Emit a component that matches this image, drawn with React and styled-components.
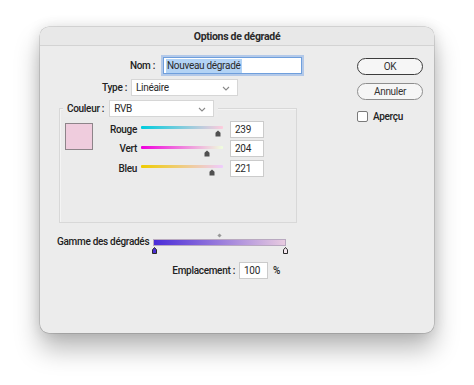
import React from "react";
import styled, { createGlobalStyle } from "styled-components";

const GlobalStyle = createGlobalStyle`
	html, body {
		margin: 0;
		background: #ffffff;
	}
	body {
		font-family: Roboto, "Noto Sans", sans-serif;
		font-size: 10px;
		letter-spacing: -0.3px;
		color: #222222;
	}
`;

const color = { r: 239, g: 204, b: 221 };

const channels = [
	{ key: "r", label: "Rouge" },
	{ key: "g", label: "Vert" },
	{ key: "b", label: "Bleu" },
];

const trackGradient = (key) => {
	const from = { ...color, [key]: 0 };
	const to = { ...color, [key]: 255 };
	return `linear-gradient(to right, rgb(${from.r},${from.g},${from.b}), rgb(${to.r},${to.g},${to.b}))`;
};

const House = ({ fill, stroke, w = 6, h = 6 }) => (
	<svg width={w} height={h} viewBox={`0 0 ${w} ${h}`}>
		<path
			d={`M${w / 2} 0.5 L${w - 0.5} ${h * 0.4} V${h - 0.5} H0.5 V${h * 0.4} Z`}
			fill={fill}
			stroke={stroke || "none"}
			strokeWidth="1"
		/>
	</svg>
);

const Chevron = () => (
	<svg width="8" height="5" viewBox="0 0 8 5">
		<path d="M1 1 L4 4 L7 1" fill="none" stroke="#8a8a8a" strokeWidth="1.1" />
	</svg>
);

const App = () => {
	return (
		<Page>
			<GlobalStyle />
			<Window>
				<TitleBar>Options de dégradé</TitleBar>
				<Body>
					<MainCol>
						<FieldRow>
							<Label $w={115}>Nom :</Label>
							<NameInput>
								<Selected>Nouveau dégradé</Selected>
							</NameInput>
						</FieldRow>

						<FieldRow $top={5}>
							<Label $w={87} $gap={4}>
								Type :
							</Label>
							<Select $w={107}>
								Linéaire
								<Chevron />
							</Select>
						</FieldRow>

						<Group>
							<Legend>
								<Label $gap={5}>Couleur :</Label>
								<Select $w={105}>
									RVB
									<Chevron />
								</Select>
							</Legend>
							<GroupContent>
								<Swatch />
								<Sliders>
									{channels.map((c) => (
										<SliderRow key={c.key}>
											<Label $w={44} $gap={4}>
												{c.label}
											</Label>
											<Track>
												<TrackBar style={{ background: trackGradient(c.key) }} />
												<Thumb style={{ left: `${(color[c.key] / 255) * 82 - 3}px` }}>
													<House w={6} h={7} fill="#505050" />
												</Thumb>
											</Track>
											<NumberBox $w={34} $left={7}>
												{color[c.key]}
											</NumberBox>
										</SliderRow>
									))}
								</Sliders>
							</GroupContent>
						</Group>

						<GammeRow>
							<GammeLabel>Gamme des dégradés</GammeLabel>
							<Range>
								<MidRow>
									<Diamond />
								</MidRow>
								<GradientBar />
								<StopsRow>
									<House w={5} h={7} fill="#4b2fd2" stroke="#2a2a2a" />
									<House w={5} h={7} fill="#f4e6ee" stroke="#2a2a2a" />
								</StopsRow>
							</Range>
						</GammeRow>

						<FieldRow $top={8}>
							<Label $w={195} $gap={4}>
								Emplacement :
							</Label>
							<NumberBox $w={29}>100</NumberBox>
							<Percent>%</Percent>
						</FieldRow>
					</MainCol>

					<SideCol>
						<Button $primary>OK</Button>
						<Button $top={8}>Annuler</Button>
						<CheckRow>
							<CheckBox />
							Aperçu
						</CheckRow>
					</SideCol>
				</Body>
			</Window>
		</Page>
	);
};

export default App;

const Page = styled.div`
	width: 474px;
	height: 385px;
	padding: 27px 0 0 40px;
	box-sizing: border-box;
`;

const Window = styled.div`
	width: 394px;
	height: 306px;
	background: #ececec;
	border-radius: 9px;
	overflow: hidden;
	display: flex;
	flex-direction: column;
	box-shadow:
		0 0 0 0.5px rgba(0, 0, 0, 0.22),
		0 16px 26px rgba(0, 0, 0, 0.28),
		0 0 14px rgba(0, 0, 0, 0.12);
`;

const TitleBar = styled.div`
	height: 18px;
	display: flex;
	align-items: center;
	justify-content: center;
	font-weight: 700;
	font-size: 10.5px;
	background: #e8e8e8;
	border-bottom: 1px solid #d3d3d3;
	color: #2a2a2a;
`;

const Body = styled.div`
	flex: 1;
	display: flex;
	padding-top: 11px;
`;

const MainCol = styled.div`
	width: 317px;
	display: flex;
	flex-direction: column;
`;

const SideCol = styled.div`
	display: flex;
	flex-direction: column;
	padding-top: 1px;
`;

const FieldRow = styled.div`
	display: flex;
	align-items: center;
	height: 17px;
	margin-top: ${(p) => p.$top || 0}px;
`;

const Label = styled.div`
	width: ${(p) => (p.$w ? `${p.$w}px` : "auto")};
	margin-right: ${(p) => (p.$gap == null ? 8 : p.$gap)}px;
	text-align: right;
	white-space: nowrap;
	flex-shrink: 0;
	font-weight: 500;
`;

const Box = styled.div`
	height: 17px;
	box-sizing: border-box;
	background: #ffffff;
	border: 1px solid #cbcbcb;
	display: flex;
	align-items: center;
	padding-left: 4px;
	white-space: nowrap;
	color: #2a2a2a;
`;

const NameInput = styled(Box)`
	width: 139px;
	border-color: #6f9fdc;
	box-shadow: 0 0 0 2px rgba(110, 160, 230, 0.45);
	padding-left: 2px;
`;

const Selected = styled.span`
	background: #b3d3f5;
	padding: 0 1px;
	line-height: 14px;
`;

const Select = styled(Box)`
	width: ${(p) => p.$w}px;
	justify-content: space-between;
	padding-right: 7px;
	border-color: #d6d6d6;

	svg {
		margin-top: 1px;
	}
`;

const NumberBox = styled(Box)`
	width: ${(p) => p.$w}px;
	margin-left: ${(p) => p.$left || 0}px;
	flex-shrink: 0;
`;

const Group = styled.div`
	margin: 12px 0 0 19px;
	width: 238px;
	height: 115px;
	box-sizing: border-box;
	border: 1px solid #d8d8d8;
	box-shadow: inset 1px 1px 0 #f4f4f4;
	background: #ebebeb;
`;

const Legend = styled.div`
	display: flex;
	align-items: center;
	width: fit-content;
	height: 17px;
	margin: -9px 0 0 3px;
	padding: 0 4px;
	background: #ececec;
`;

const GroupContent = styled.div`
	display: flex;
	padding: 4px 0 0 5px;
`;

const Swatch = styled.div`
	width: 28px;
	height: 27px;
	box-sizing: border-box;
	margin-top: 2px;
	background: rgb(239, 204, 221);
	border: 1.5px solid #8d8489;
`;

const Sliders = styled.div`
	display: flex;
	flex-direction: column;
	gap: 3.5px;
`;

const SliderRow = styled.div`
	display: flex;
	align-items: center;
	height: 16px;
`;

const Track = styled.div`
	position: relative;
	width: 82px;
	height: 16px;
	flex-shrink: 0;
`;

const TrackBar = styled.div`
	margin-top: 5px;
	height: 3px;
	border-radius: 1px;
`;

const Thumb = styled.div`
	position: absolute;
	top: 9px;
	line-height: 0;
`;

const GammeRow = styled.div`
	display: flex;
	margin: 9px 0 0 17px;
`;

const GammeLabel = styled.div`
	margin-top: 3px;
	line-height: 14px;
	white-space: nowrap;
	width: 90px;
	margin-right: 6px;
	font-weight: 500;
`;

const Range = styled.div`
	width: 133px;
	display: flex;
	flex-direction: column;
`;

const MidRow = styled.div`
	height: 6px;
	display: flex;
	justify-content: center;
	align-items: center;
`;

const Diamond = styled.div`
	width: 3px;
	height: 3px;
	background: #9a9a9a;
	transform: rotate(45deg);
`;

const GradientBar = styled.div`
	margin-top: 1px;
	height: 5px;
	background: linear-gradient(to right, #4a2cd8, #e8cbe0);
	border: 0.5px solid #b9a9c0;
`;

const StopsRow = styled.div`
	margin: 1px -2px 0 -1px;
	height: 7px;
	display: flex;
	justify-content: space-between;
	line-height: 0;
`;

const Percent = styled.div`
	margin-left: 5px;
	font-weight: 500;
`;

const Button = styled.div`
	width: 66px;
	height: 17px;
	box-sizing: border-box;
	margin-top: ${(p) => p.$top || 0}px;
	border-radius: 9px;
	display: flex;
	align-items: center;
	justify-content: center;
	background: #f6f6f6;
	border: ${(p) => (p.$primary ? "1.5px solid #3c3c3c" : "1px solid #8e8e8e")};
	color: #333333;
`;

const CheckRow = styled.div`
	display: flex;
	align-items: center;
	gap: 5px;
	margin-top: 9px;
	height: 14px;
	font-weight: 500;
`;

const CheckBox = styled.div`
	width: 9px;
	height: 9px;
	background: #ffffff;
	border: 1px solid #7a7a7a;
	border-radius: 2px;
`;
